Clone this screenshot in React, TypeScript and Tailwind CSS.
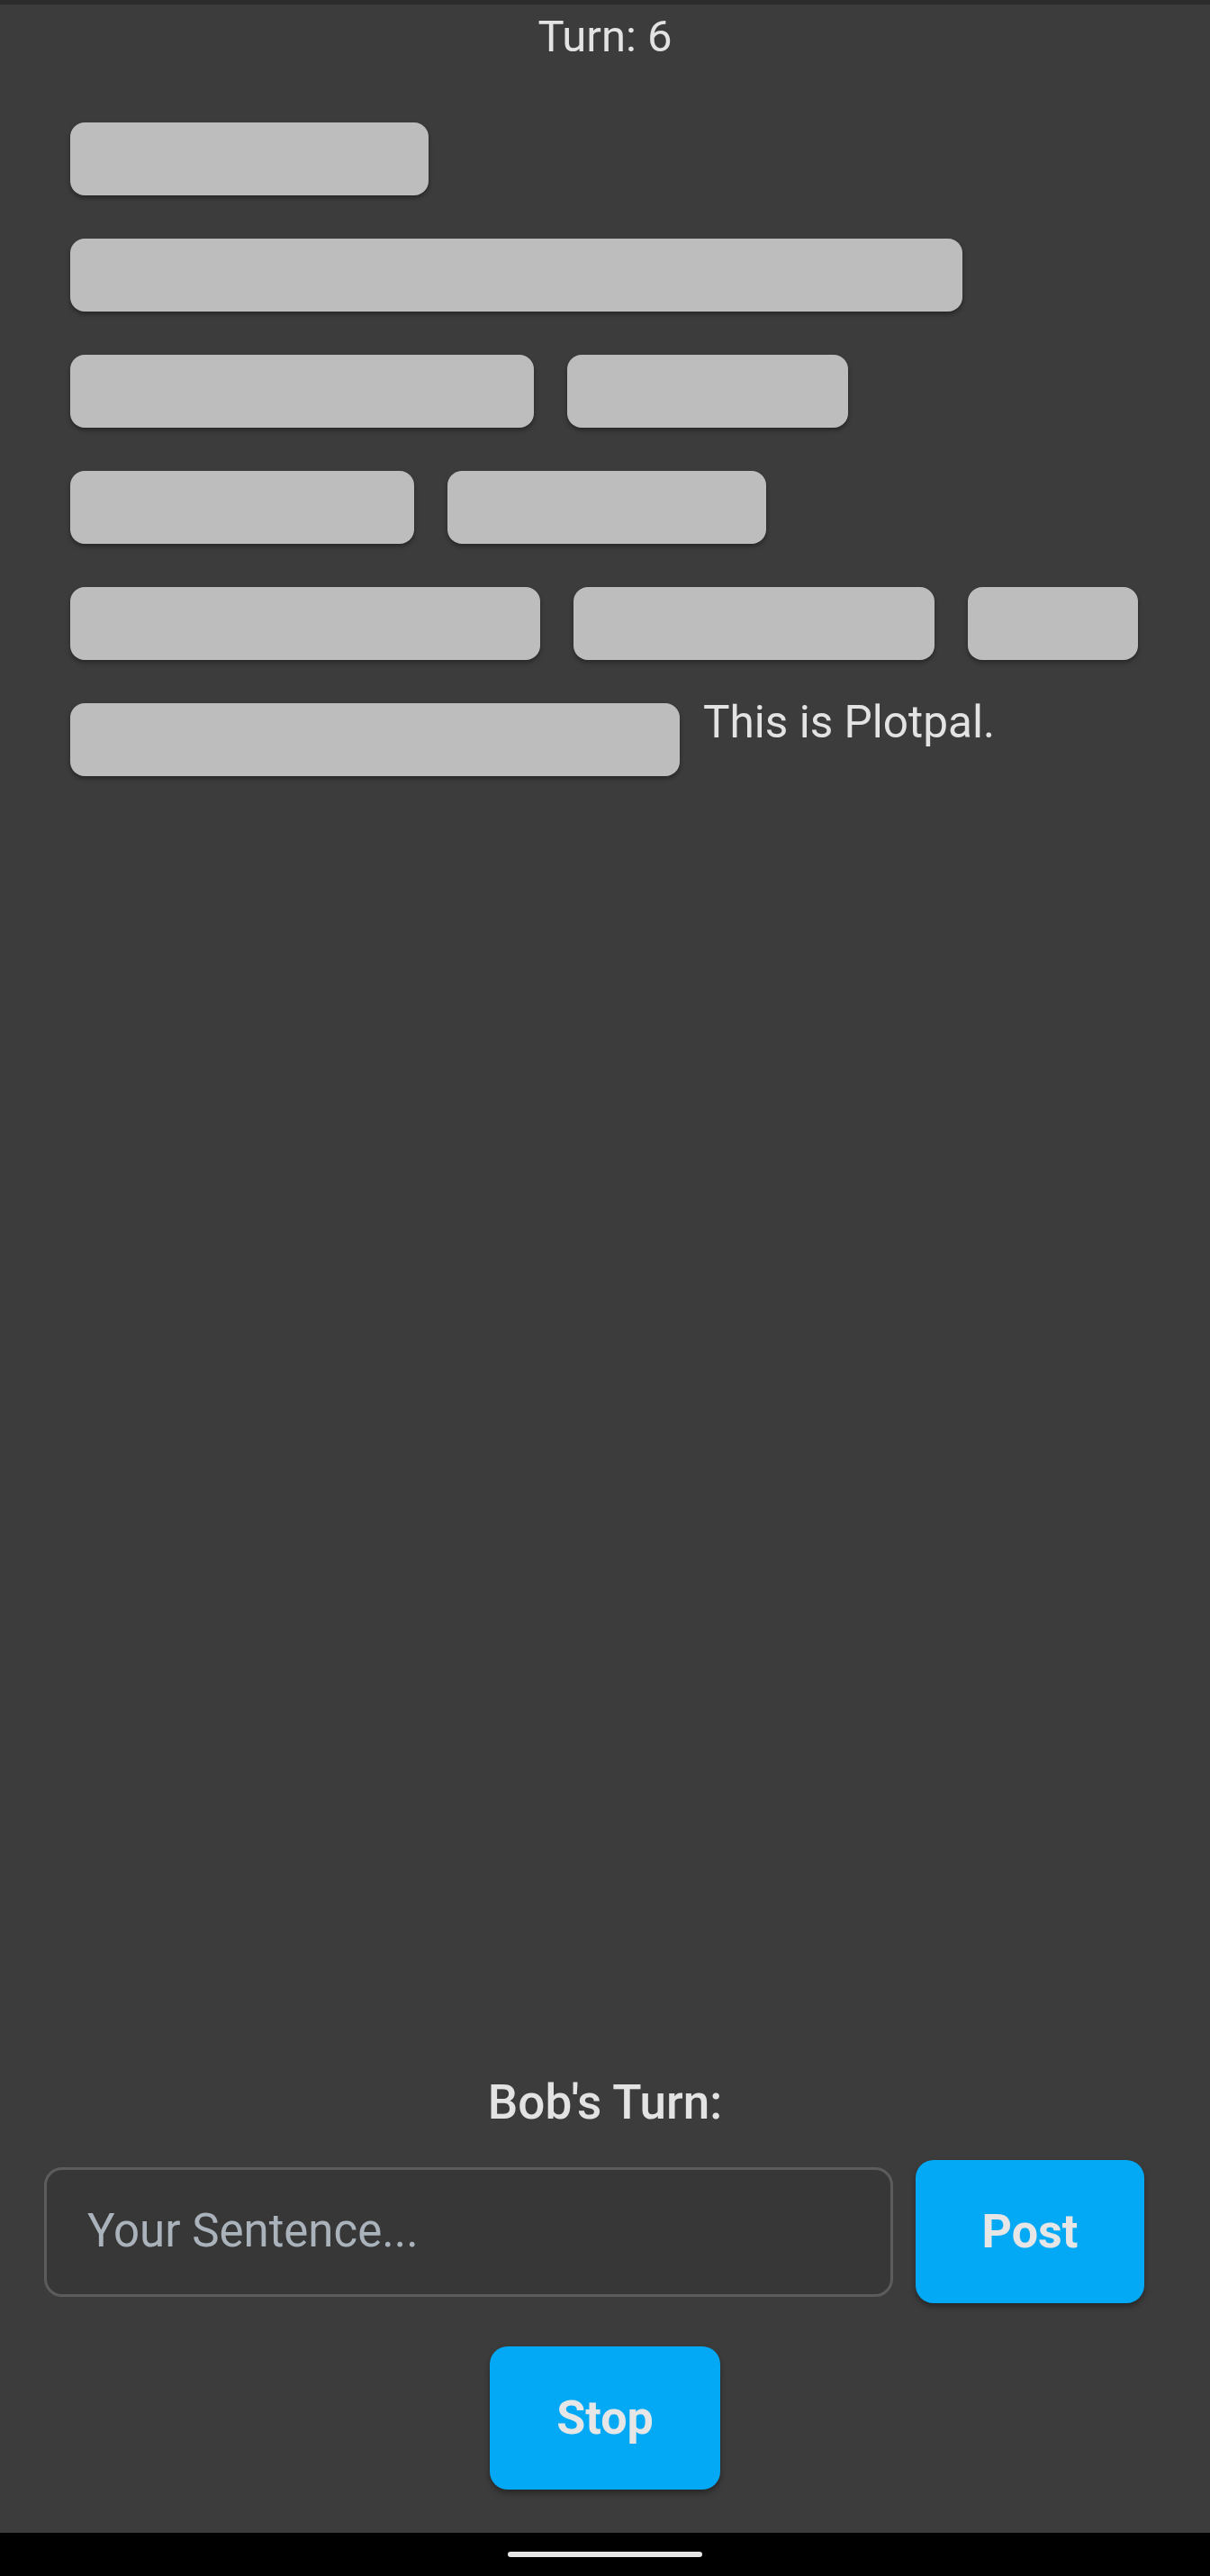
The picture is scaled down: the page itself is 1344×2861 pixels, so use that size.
import React from 'react';

// widths of the hidden word tiles, one array per line
const rows: number[][] = [
  [398],
  [991],
  [515, 312],
  [382, 354],
  [522, 401, 189],
];

function Tile({ width }: { width: number }) {
  return (
    <div
      className="h-[81px] shrink-0 rounded-[16px] bg-[#bdbdbd] shadow-[0_3px_5px_rgba(0,0,0,0.35)]"
      style={{ width }}
    />
  );
}

export default function App() {
  return (
    <div
      className="flex h-[2861px] w-[1344px] flex-col bg-[#3c3c3c] text-[#e3e3e3]"
      style={{ fontFamily: 'Roboto, "Liberation Sans", sans-serif' }}
    >
      <div className="h-[5px] bg-[#2b2b2b]" />

      <main className="flex flex-1 flex-col">
        <p className="mt-[7px] text-center text-[49px] leading-[57px]">Turn: 6</p>

        {/* Story so far */}
        <div className="mt-[67px] flex flex-col gap-[48px] pl-[78px]">
          {rows.map((row, i) => (
            <div key={i} className="flex gap-[37px]">
              {row.map((w, j) => (
                <Tile key={j} width={w} />
              ))}
            </div>
          ))}
          <div className="flex items-start gap-[26px]">
            <Tile width={677} />
            <span className="-mt-[7px] text-[49.5px] leading-[57px]">This is Plotpal.</span>
          </div>
        </div>

        <div className="flex-1" />

        {/* Turn controls */}
        <p className="text-center text-[53px] font-medium leading-[61px]">Bob's Turn:</p>

        <div className="mt-[33px] flex items-center gap-[25px] pl-[49px] pr-[73px]">
          <div className="flex h-[144px] flex-1 items-center rounded-[20px] border-[3px] border-[#5c5c5c] bg-[#373737] pl-[45px]">
            <span className="text-[51px] text-[#aab3bb]">Your Sentence...</span>
          </div>
          <button className="h-[159px] w-[254px] rounded-[20px] bg-[#03a9f4] text-[52px] font-bold text-[#e6e6e6] shadow-[0_4px_6px_rgba(0,0,0,0.35)]">
            Post
          </button>
        </div>

        <div className="mb-[48px] mt-[48px] flex justify-center">
          <button className="h-[159px] w-[256px] rounded-[20px] bg-[#03a9f4] text-[52px] font-bold text-[#e6e6e6] shadow-[0_4px_6px_rgba(0,0,0,0.35)]">
            Stop
          </button>
        </div>
      </main>

      {/* Android nav bar */}
      <div className="flex h-[48px] items-center justify-center bg-black">
        <div className="h-[6px] w-[216px] rounded-full bg-[#e6e6e6]" />
      </div>
    </div>
  );
}
